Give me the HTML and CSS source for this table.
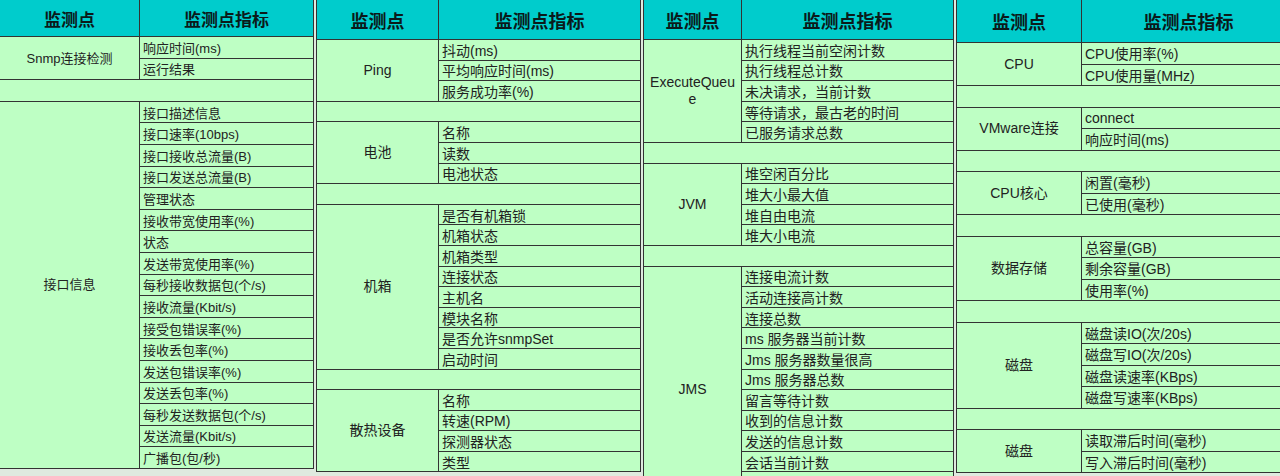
FILE: index.html
```html
<!DOCTYPE html>
<html lang="zh-CN">
<head>
<meta charset="utf-8">
<title>监测点指标</title>
<link rel="stylesheet" href="styles.css">
</head>
<body>
<div class="page">
  <section class="sheet t1">
    <div class="hd">监测点</div><div class="hd">监测点指标</div>
    <div class="lbl s2">Snmp连接检测</div>
    <div class="m">响应时间(ms)</div>
    <div class="m">运行结果</div>
    <div class="sp"></div>
    <div class="lbl s17">接口信息</div>
    <div class="m">接口描述信息</div>
    <div class="m">接口速率(10bps)</div>
    <div class="m">接口接收总流量(B)</div>
    <div class="m">接口发送总流量(B)</div>
    <div class="m">管理状态</div>
    <div class="m">接收带宽使用率(%)</div>
    <div class="m">状态</div>
    <div class="m">发送带宽使用率(%)</div>
    <div class="m">每秒接收数据包(个/s)</div>
    <div class="m">接收流量(Kbit/s)</div>
    <div class="m">接受包错误率(%)</div>
    <div class="m">接收丢包率(%)</div>
    <div class="m">发送包错误率(%)</div>
    <div class="m">发送丢包率(%)</div>
    <div class="m">每秒发送数据包(个/s)</div>
    <div class="m">发送流量(Kbit/s)</div>
    <div class="m">广播包(包/秒)</div>
  </section>

  <section class="sheet t2">
    <div class="hd">监测点</div><div class="hd">监测点指标</div>
    <div class="lbl s3">Ping</div>
    <div class="m">抖动(ms)</div>
    <div class="m">平均响应时间(ms)</div>
    <div class="m">服务成功率(%)</div>
    <div class="sp"></div>
    <div class="lbl s3">电池</div>
    <div class="m">名称</div>
    <div class="m">读数</div>
    <div class="m">电池状态</div>
    <div class="sp"></div>
    <div class="lbl s8">机箱</div>
    <div class="m">是否有机箱锁</div>
    <div class="m">机箱状态</div>
    <div class="m">机箱类型</div>
    <div class="m">连接状态</div>
    <div class="m">主机名</div>
    <div class="m">模块名称</div>
    <div class="m">是否允许snmpSet</div>
    <div class="m">启动时间</div>
    <div class="sp"></div>
    <div class="lbl s4">散热设备</div>
    <div class="m">名称</div>
    <div class="m">转速(RPM)</div>
    <div class="m">探测器状态</div>
    <div class="m">类型</div>
  </section>

  <section class="sheet t3">
    <div class="hd">监测点</div><div class="hd">监测点指标</div>
    <div class="lbl s5 wrap">ExecuteQueue</div>
    <div class="m">执行线程当前空闲计数</div>
    <div class="m">执行线程总计数</div>
    <div class="m">未决请求，当前计数</div>
    <div class="m">等待请求，最古老的时间</div>
    <div class="m">已服务请求总数</div>
    <div class="sp"></div>
    <div class="lbl s4">JVM</div>
    <div class="m">堆空闲百分比</div>
    <div class="m">堆大小最大值</div>
    <div class="m">堆自由电流</div>
    <div class="m">堆大小电流</div>
    <div class="sp"></div>
    <div class="lbl s12">JMS</div>
    <div class="m">连接电流计数</div>
    <div class="m">活动连接高计数</div>
    <div class="m">连接总数</div>
    <div class="m">ms 服务器当前计数</div>
    <div class="m">Jms 服务器数量很高</div>
    <div class="m">Jms 服务器总数</div>
    <div class="m">留言等待计数</div>
    <div class="m">收到的信息计数</div>
    <div class="m">发送的信息计数</div>
    <div class="m">会话当前计数</div>
    <div class="m"></div>
    <div class="m"></div>
  </section>

  <section class="sheet t4">
    <div class="hd">监测点</div><div class="hd">监测点指标</div>
    <div class="lbl s2">CPU</div>
    <div class="m">CPU使用率(%)</div>
    <div class="m">CPU使用量(MHz)</div>
    <div class="sp"></div>
    <div class="lbl s2">VMware连接</div>
    <div class="m">connect</div>
    <div class="m">响应时间(ms)</div>
    <div class="sp"></div>
    <div class="lbl s2">CPU核心</div>
    <div class="m">闲置(毫秒)</div>
    <div class="m">已使用(毫秒)</div>
    <div class="sp"></div>
    <div class="lbl s3">数据存储</div>
    <div class="m">总容量(GB)</div>
    <div class="m">剩余容量(GB)</div>
    <div class="m">使用率(%)</div>
    <div class="sp"></div>
    <div class="lbl s4">磁盘</div>
    <div class="m">磁盘读IO(次/20s)</div>
    <div class="m">磁盘写IO(次/20s)</div>
    <div class="m">磁盘读速率(KBps)</div>
    <div class="m">磁盘写速率(KBps)</div>
    <div class="sp"></div>
    <div class="lbl s2">磁盘</div>
    <div class="m">读取滞后时间(毫秒)</div>
    <div class="m">写入滞后时间(毫秒)</div>
  </section>
</div>
</body>
</html>
```
FILE: styles.css
```css
* { box-sizing: border-box; }

html, body {
  margin: 0;
  padding: 0;
}

body {
  background: #dfeadf;
  font-family: "Liberation Sans", "Noto Sans CJK SC", sans-serif;
  color: #222;
}

.page {
  display: flex;
  gap: 2px;
  width: 1280px;
  height: 476px;
  overflow: hidden;
  align-items: flex-start;
}

.sheet {
  display: grid;
  flex: none;
  background: #beffc4;
  border-left: 1px solid #333;
  font-size: 14px;
}

.t1 {
  width: 314px;
  border-left: none;
  grid-template-columns: 140px 1fr;
  grid-template-rows: 37px;
  grid-auto-rows: 21.6px;
  font-size: 13px;
}

.t2 {
  width: 325px;
  grid-template-columns: 122px 1fr;
  grid-template-rows: 40px;
  grid-auto-rows: 20.6px;
}

.t3 {
  width: 311px;
  grid-template-columns: 98px 1fr;
  grid-template-rows: 40px;
  grid-auto-rows: 20.6px;
}

.t4 {
  width: 340px;
  grid-template-columns: 125px 1fr;
  grid-template-rows: 43px;
  grid-auto-rows: 21.5px;
}

.hd, .lbl, .m, .sp {
  border-right: 1px solid #333;
  border-bottom: 1px solid #333;
}

.hd {
  background: #00cccc;
  display: flex;
  align-items: center;
  justify-content: center;
  font-family: "Noto Sans CJK SC", sans-serif;
  font-weight: 700;
  font-size: 18px;
  color: #0b1a1a;
}

.t1 .hd { font-size: 17px; }

.hd:nth-child(1) { grid-column: 1; }
.hd:nth-child(2) { grid-column: 2; }

.lbl {
  grid-column: 1;
  display: flex;
  align-items: center;
  justify-content: center;
  text-align: center;
  padding: 0 4px;
  line-height: 17px;
}

.wrap { word-break: break-all; }

.m {
  grid-column: 2;
  display: flex;
  align-items: center;
  padding-left: 3px;
  white-space: nowrap;
  overflow: hidden;
}

.sp { grid-column: 1 / -1; }

.s2 { grid-row: span 2; }
.s3 { grid-row: span 3; }
.s4 { grid-row: span 4; }
.s5 { grid-row: span 5; }
.s8 { grid-row: span 8; }
.s12 { grid-row: span 12; }
.s17 { grid-row: span 17; }
```
